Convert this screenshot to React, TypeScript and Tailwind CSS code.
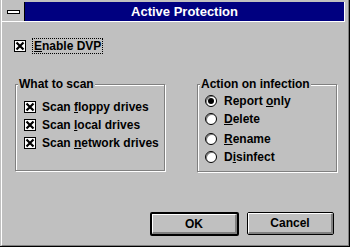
import React from "react";

type Opt = { pre: string; key: string; post: string; on?: boolean };

const scanOpts: Opt[] = [
  { pre: "Scan ", key: "f", post: "loppy drives", on: true },
  { pre: "Scan ", key: "l", post: "ocal drives", on: true },
  { pre: "Scan ", key: "n", post: "etwork drives", on: true },
];

const actionOpts: (Opt & { gap: string })[] = [
  { pre: "Report ", key: "o", post: "nly", on: true, gap: "mt-0" },
  { pre: "", key: "D", post: "elete", gap: "mt-[4px]" },
  { pre: "", key: "R", post: "ename", gap: "mt-[6px]" },
  { pre: "D", key: "i", post: "sinfect", gap: "mt-[4px]" },
];

const Label = ({ pre, keyChar, post }: { pre: string; keyChar: string; post: string }) => (
  <span className="whitespace-pre">
    {pre}
    <u className="underline underline-offset-[1px]">{keyChar}</u>
    {post}
  </span>
);

const CheckBox = ({ checked }: { checked?: boolean }) => (
  <span className="flex h-[12px] w-[12px] shrink-0 items-center justify-center border border-black bg-white">
    {checked && (
      <svg width="10" height="10" viewBox="0 0 10 10">
        <path d="M1.5 1.5L8.5 8.5M8.5 1.5L1.5 8.5" stroke="black" strokeWidth="2.2" />
      </svg>
    )}
  </span>
);

const Radio = ({ checked }: { checked?: boolean }) => (
  <span className="flex h-[12px] w-[12px] shrink-0 items-center justify-center rounded-full border border-black bg-white shadow-[inset_1px_1px_0_#808080]">
    {checked && <span className="h-[6px] w-[6px] rounded-full bg-black" />}
  </span>
);

const Group = ({
  title,
  className,
  children,
}: {
  title: string;
  className: string;
  children: React.ReactNode;
}) => (
  <div
    className={`relative border border-[#808080] shadow-[1px_1px_0_white,inset_1px_1px_0_white] ${className}`}
  >
    <span className="absolute -top-[8px] left-[2px] bg-[#c0c0c0] px-px leading-[14px]">
      {title}
    </span>
    {children}
  </div>
);

const Button = ({ label, isDefault }: { label: string; isDefault?: boolean }) => (
  <div
    className={`rounded-[2px] border-black bg-[#c0c0c0] ${
      isDefault ? "h-[24px] w-[89px] border-2" : "h-[23px] w-[87px] border"
    }`}
  >
    <div className="flex h-full w-full items-center justify-center border-t border-l border-r-2 border-b-2 border-t-white border-l-white border-r-[#808080] border-b-[#808080]">
      {label}
    </div>
  </div>
);

export default function App() {
  return (
    <div className="h-[247px] w-[350px] overflow-hidden border-r border-b border-black bg-[#c0c0c0] font-['Liberation_Sans',Arial,sans-serif] text-[12px] font-bold leading-[14px] text-black">
      <div className="ml-px flex h-full flex-col border-l border-r border-b border-l-white border-r-[#808080] border-b-[#808080] pt-[2px]">
        {/* Title bar */}
        <div className="flex h-[20px] w-[343px] shrink-0 border-r border-b border-white">
          <div className="flex w-[23px] items-center justify-center border-r border-black bg-[#c0c0c0]">
            <span className="h-[4px] w-[13px] border border-black bg-white" />
          </div>
          <div className="flex flex-1 items-center justify-center bg-[#000080] text-[13px] text-white">
            Active Protection
          </div>
        </div>

        {/* Body */}
        <div className="flex flex-1 flex-col">
          <div className="mt-[16px] flex items-center gap-[6px] pl-[12px]">
            <CheckBox checked />
            <span className="border border-dotted border-black px-px">
              <Label pre="" keyChar="E" post="nable DVP" />
            </span>
          </div>

          <div className="mt-[30px] flex items-start pl-[13px]">
            <Group title="What to scan" className="h-[87px] w-[150px] pt-[15px] pl-[8px]">
              <div className="flex flex-col gap-[4px]">
                {scanOpts.map((o) => (
                  <div key={o.key} className="flex h-[14px] items-center gap-[6px]">
                    <CheckBox checked={o.on} />
                    <Label pre={o.pre} keyChar={o.key} post={o.post} />
                  </div>
                ))}
              </div>
            </Group>

            <Group title="Action on infection" className="ml-[32px] h-[88px] w-[140px] pt-[9px] pl-[7px]">
              <div className="flex flex-col">
                {actionOpts.map((o) => (
                  <div key={o.key} className={`flex h-[14px] items-center gap-[7px] ${o.gap}`}>
                    <Radio checked={o.on} />
                    <Label pre={o.pre} keyChar={o.key} post={o.post} />
                  </div>
                ))}
              </div>
            </Group>
          </div>

          <div className="mt-auto flex items-start justify-end gap-[8px] pr-[14px] pb-[9px]">
            <Button label="OK" isDefault />
            <Button label="Cancel" />
          </div>
        </div>
      </div>
    </div>
  );
}
